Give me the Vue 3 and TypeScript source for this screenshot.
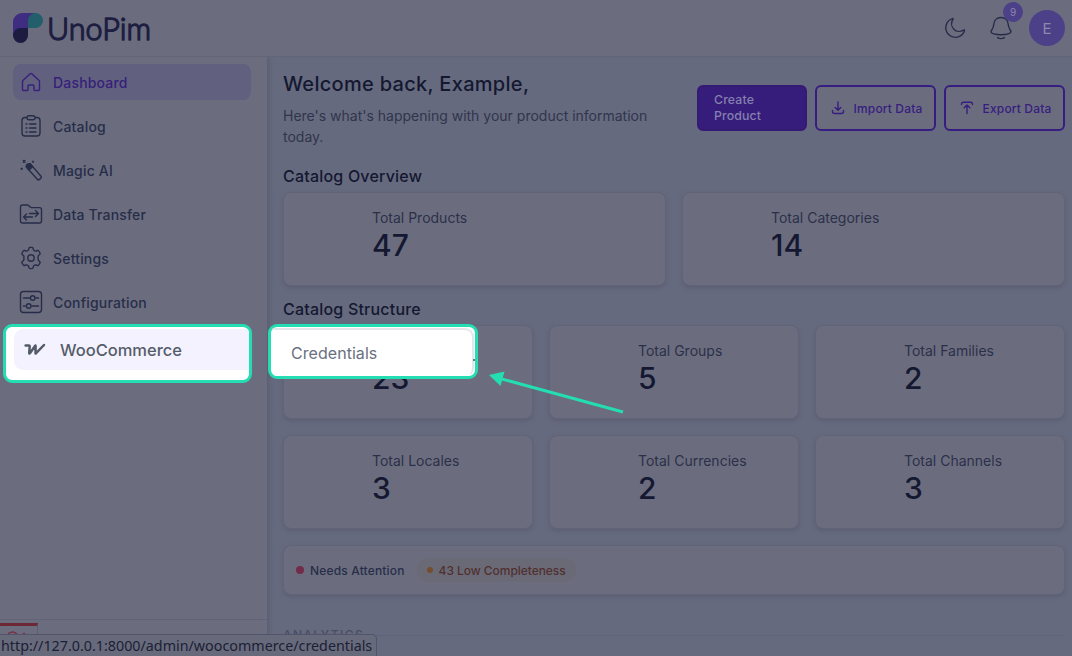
<script setup lang="ts">
interface NavItem { label: string; icon: string }
interface Stat { label: string; value: string }

const nav: NavItem[] = [
  { label: 'Dashboard', icon: 'home' },
  { label: 'Catalog', icon: 'catalog' },
  { label: 'Magic AI', icon: 'magic' },
  { label: 'Data Transfer', icon: 'transfer' },
  { label: 'Settings', icon: 'settings' },
  { label: 'Configuration', icon: 'config' },
]
const overview: Stat[] = [
  { label: 'Total Products', value: '47' },
  { label: 'Total Categories', value: '14' },
]
const structure: Stat[] = [
  { label: 'Total Attributes', value: '23' },
  { label: 'Total Groups', value: '5' },
  { label: 'Total Families', value: '2' },
  { label: 'Total Locales', value: '3' },
  { label: 'Total Currencies', value: '2' },
  { label: 'Total Channels', value: '3' },
]
</script>

<template>
  <div class="app">
    <header class="header">
      <svg class="logo" width="144" height="40" viewBox="0 0 144 40">
        <path d="M9 5H23V20H15V28H0V14A9 9 0 0 1 9 5Z" fill="#3e2d80" />
        <path d="M22.500 5a7.500 7.500 0 0 1 0 15H15v-7.500A7.500 7.500 0 0 1 22.500 5Z" fill="#235f6b" />
        <path d="M7.500 20H15V27.500A7.500 7.500 0 1 1 7.500 20Z" fill="#1b1c3f" />
        <text class="wordmark" x="34" y="32" textLength="104" lengthAdjust="spacingAndGlyphs">UnoPim</text>
      </svg>
      <div class="tools">
        <svg class="moon" width="24" height="24" viewBox="0 0 24 24"><path d="M9.400 2.600A9.600 9.600 0 1 0 21.500 14.800c.2-.9-.4-1.100-1-.6A7.700 7.700 0 0 1 9.900 3.500c.4-.6.200-1.100-.5-.9Z" /></svg>
        <div class="bell-wrap">
          <svg width="24" height="26" viewBox="0 0 24 26"><path d="M12 2.500c-4.400 0-7 3-7.200 6.700C4.600 13 2.600 14.600 2.100 16.300c-.6 2.300 4.300 3.400 9.900 3.400s10.500-1.100 9.900-3.400c-.5-1.700-2.500-3.300-2.700-7.100C19 5.500 16.400 2.500 12 2.500ZM8.600 22.600c1.800 1.300 5 1.300 6.800 0" /></svg>
          <span class="count">9</span>
        </div>
        <span class="avatar">E</span>
      </div>
    </header>

    <div class="body">
      <aside class="sidebar">
        <nav class="nav">
          <div v-for="(n, i) in nav" :key="n.label" class="nav-item" :class="{ active: i === 0 }">
            <svg width="24" height="24" viewBox="0 0 24 24">
              <path v-if="n.icon === 'home'" d="M3.500 11.500q0-.8.600-1.300L11.200 3.800q.8-.7 1.600 0L19.900 10.200q.6.500.6 1.300V19.500q0 1-1 1H16q-1 0-1-1V16q0-1-1-1h-4q-1 0-1 1v3.500q0 1-1 1H4.500q-1 0-1-1Z" />
              <g v-else-if="n.icon === 'catalog'">
                <path d="M8 3.500H6a3 3 0 0 0-3 3V19a3 3 0 0 0 3 3h12a3 3 0 0 0 3-3V6.500a3 3 0 0 0-3-3h-2M10 1.800h4q2 0 2 2t-2 2h-4q-2 0-2-2t2-2Z" />
                <path d="M10.500 10h6.500M10.500 14h6.500M10.500 18h6.500M7 10h1M7 14h1M7 18h1" />
              </g>
              <g v-else-if="n.icon === 'magic'">
                <path d="m7.300 9 3.800-3.400 10.900 12.600q.9 1.100-.3 2.200l-1.200 1q-1.200 1-2.200-.2L7.300 9Z" />
                <path class="solid" d="M7.300 8.600Q7 5.600 10.900 5.600L13.700 8.800 10 12Z" />
                <path d="m4.300 2.600 1.600 1.600M5.900 2.600 4.300 4.200M2.700 10.200l.01 1.200M2.100 10.800h1.200M14 3.300v1M13.500 3.800h1" />
              </g>
              <g v-else-if="n.icon === 'transfer'">
                <path d="M3.500 3H8.500q.6 0 1 .4l1.700 1.700q.5.500 1.200.500H20.500q2 0 2 2V19q0 2-2 2h-17q-2 0-2-2V5q0-2 2-2Z" />
                <path d="M10.500 11.500H19.500m-3-3 3 3-3 3M13.500 15H4.500m3-3-3 3 3 3" />
              </g>
              <g v-else-if="n.icon === 'settings'">
                <path d="M9.900 2.300q.2-.9 1.100-.9h2q.9 0 1.100.9l.3 1.300q.2.700.9 1l.5.300q.7.300 1.300.1l1.300-.5q.9-.3 1.400.5l1.100 1.900q.5.800-.2 1.500l-1 .9q-.6.500-.6 1.200v3q0 .7.600 1.200l1 .9q.7.700.2 1.500l-1.100 1.900q-.5.800-1.400.5l-1.300-.5q-.6-.2-1.300.1l-.5.300q-.7.300-.9 1l-.3 1.300q-.2.900-1.100.9h-2q-.9 0-1.100-.9l-.3-1.300q-.2-.7-.9-1l-.5-.3q-.7-.3-1.300-.1l-1.300.5q-.9.300-1.400-.5l-1.100-1.900q-.5-.8.200-1.500l1-.9q.6-.5.600-1.200v-3q0-.7-.6-1.200l-1-.9q-.7-.7-.2-1.500l1.100-1.900q.5-.8 1.400-.5l1.300.5q.6.200 1.300-.1l.5-.3q.7-.3.900-1Z" />
                <circle cx="12" cy="12" r="3.200" />
              </g>
              <g v-else>
                <rect x="1.500" y="1.500" width="21" height="21" rx="3" />
                <path d="M4.500 8h6m6.500 0h2.500M4.500 16h1.500m7 0h6.500" />
                <circle cx="13.700" cy="8" r="2.300" /><circle cx="9.700" cy="16" r="2.300" />
              </g>
            </svg>
            <span>{{ n.label }}</span>
          </div>
        </nav>
        <div class="collapse"></div>
      </aside>

      <main class="main">
        <section class="intro">
          <div class="intro-text">
            <h1>Welcome back, Example,</h1>
            <p>Here's what's happening with your product information today.</p>
          </div>
          <div class="actions">
            <button class="btn primary">Create Product</button>
            <button class="btn">
              <svg width="16" height="16" viewBox="0 0 16 16"><path d="M8 2v8M5.200 7.500 8 10.300l2.800-2.800M2.500 10.500v1q0 2 2 2h7q2 0 2-2v-1" /></svg>
              Import Data
            </button>
            <button class="btn">
              <svg width="16" height="16" viewBox="0 0 16 16"><path d="M8 13.500V5M5.200 7.700 8 4.900l2.800 2.800M2.500 4.500v-.3q0-2 2-2h7q2 0 2 2v.3" /></svg>
              Export Data
            </button>
          </div>
        </section>
        <h2>Catalog Overview</h2>
        <div class="grid two">
          <div v-for="s in overview" :key="s.label" class="card">
            <span class="label">{{ s.label }}</span><strong>{{ s.value }}</strong>
          </div>
        </div>
        <h2 class="second">Catalog Structure</h2>
        <div class="grid three">
          <div v-for="s in structure" :key="s.label" class="card">
            <span class="label">{{ s.label }}</span><strong>{{ s.value }}</strong>
          </div>
        </div>
        <div class="attention">
          <i class="dot"></i><span class="needs">Needs Attention</span>
          <span class="pill"><i></i>43 Low Completeness</span>
        </div>
        <div class="analytics"><span>ANALYTICS</span><i></i></div>
      </main>
    </div>

    <div class="debug"><svg width="30" height="12" viewBox="0 0 30 12"><path d="m7.500 9 2-2.200 3-1 3 1 2 2.200M22.500 8.500l2-1" /></svg></div>
    <div class="status">http://127.0.0.1:8000/admin/woocommerce/credentials</div>

    <div class="spot woo">
      <div class="woo-item">
        <svg width="24" height="16" viewBox="0 0 24 16"><path d="M2.600 3.500H6q.8 0 .7.900L6.200 11q0 1 .7.200L12 4q.7-1 .6.200L12.500 11q0 1 .6.200L21 3" /></svg>
        <span>WooCommerce</span>
      </div>
    </div>
    <div class="spot cred"><div class="cred-item">Credentials</div><i class="speck"></i></div>
    <svg class="arrow" width="140" height="46" viewBox="0 0 140 46">
      <path d="M138 42 15 8.500" /><path class="head" d="M4 5 19.500 1.500 15.500 16Z" />
    </svg>
  </div>
</template>

<style>
body { margin: 0; overflow: hidden; }
</style>

<style scoped>
* { box-sizing: border-box; }
.app { position: relative; width: 1072px; height: 656px; overflow: hidden; background: #666a7e; font-family: Inter, "Liberation Sans", sans-serif; color: #272d49; }
svg { fill: none; stroke: currentColor; stroke-width: 1.4; stroke-linecap: round; stroke-linejoin: round; flex: none; display: block; }
.header { height: 57px; background: #6b6d7e; border-bottom: 1px solid #626477; display: flex; justify-content: space-between; align-items: center; padding: 0 7px 0 13px; }
.logo { stroke: none; overflow: visible; }
.wordmark { font: 300 32px Lato, sans-serif; fill: #1d1e41; stroke: #1d1e41; stroke-width: 1.5; }
.tools { display: flex; align-items: center; }
.moon { margin-right: 22px; }
.bell-wrap { position: relative; margin-right: 16px; }
.count { position: absolute; left: 14px; top: -13px; width: 20px; height: 20px; border-radius: 50%; background: #4c4088; color: #8c88ae; font-size: 10px; line-height: 20px; text-align: center; }
.avatar { width: 36px; height: 36px; border-radius: 50%; background: #4c4088; color: #8c88ae; font-size: 15px; font-weight: 400; line-height: 37px; text-align: center; }
.body { display: flex; height: 599px; }
.sidebar { width: 267px; background: #6b6d7e; box-shadow: 1px 0 5px #56596e; clip-path: inset(0 -10px 0 0); display: flex; flex-direction: column; flex: none; }
.nav { padding: 7px 16px 0 13px; display: flex; flex-direction: column; gap: 8px; flex: 1; }
.nav-item { height: 36px; border-radius: 8px; padding: 0 6px; display: flex; align-items: center; gap: 10px; font-size: 14px; font-weight: 500; letter-spacing: .18px; }
.active { background: #62607f; color: #36207a; }
.solid { fill: currentColor; }
.collapse { height: 37px; border-top: 1px solid #616477; }
.main { flex: 1; padding: 13px 7px 0 16px; min-width: 0; }
.intro { display: flex; justify-content: space-between; height: 94px; }
.intro-text { width: 400px; }
h1 { margin: 0; font-size: 20px; line-height: 28px; font-weight: 500; color: #141831; letter-spacing: .3px; }
p { margin: 7px 0 0; font-size: 14px; line-height: 21px; color: #30354d; letter-spacing: 0; }
.actions { display: flex; gap: 8px; padding-top: 15px; }
.btn { height: 46px; width: 121px; border: 2px solid #371d80; border-radius: 6px; background: #6b6d7e; color: #371d80; font: 500 12px Inter, sans-serif; letter-spacing: .15px; padding: 0 0 0 1px; display: flex; align-items: center; justify-content: center; gap: 8px; white-space: nowrap; }
.primary { width: 110px; background: #361c7b; color: #8580ae; border-color: #331a75; font-size: 12.300px; line-height: 16px; white-space: normal; text-align: left; padding: 0 36px 0 15px; }
h2 { margin: 0; font-size: 16px; line-height: 24px; font-weight: 500; color: #141831; letter-spacing: .2px; }
.second { margin-top: 11px; }
.grid { display: grid; gap: 16px; margin-top: 4px; }
.two { grid-template-columns: 1fr 1fr; }
.three { grid-template-columns: 1fr 1fr 1fr; }
.card { height: 94px; border: 1px solid #616478; border-radius: 8px; background: #6b6d7e; box-shadow: 0 2px 4px #5c5f73; padding: 15px 0 0 88px; display: flex; flex-direction: column; }
.label { font-size: 14px; line-height: 20px; color: #2b304a; }
strong { font-size: 30px; line-height: 34px; font-weight: 500; color: #141831; }
.attention { height: 50px; margin-top: 16px; border: 1px solid #616478; border-radius: 8px; background: #6b6d7e; box-shadow: 0 2px 4px #5c5f73; display: flex; align-items: center; padding-left: 12px; font-size: 12px; font-weight: 500; }
.needs { letter-spacing: .17px; }
.dot { width: 8px; height: 8px; border-radius: 50%; background: #722b48; margin-right: 6px; }
.pill { margin-left: 12px; height: 24px; border-radius: 12px; background: #6a6a77; color: #50302f; display: flex; align-items: center; padding: 0 10px; letter-spacing: -.05px; }
.pill i { width: 6px; height: 6px; border-radius: 50%; background: #764d2c; margin-right: 6px; }
.analytics { margin-top: 32px; display: flex; align-items: center; gap: 12px; font-size: 12px; line-height: 16px; font-weight: 500; letter-spacing: 1.4px; color: #494d66; }
.analytics i { flex: 1; height: 1px; background: #606377; }
.debug { position: absolute; left: 0; top: 623px; width: 38px; height: 33px; border-top: 3px solid #6d2735; border-right: 1px solid #5c5f72; color: #7c2d42; background: #6b6d7e; }
.status { position: absolute; left: 0; top: 634px; width: 377px; height: 23px; padding-left: 1px; border: 1px solid #525569; border-left: 0; border-radius: 0 5px 0 0; background: #676a7b; color: #1c2036; font: 14.300px/21px "Noto Sans", sans-serif; white-space: nowrap; }
.spot { position: absolute; background: #fff; border: 3px solid #24ddb2; border-radius: 9px; overflow: hidden; }
.woo { left: 3px; top: 324px; width: 249px; height: 59px; padding: 2px 0 0 8px; }
.woo-item { height: 41px; background: #f4f2fe; border-radius: 9px 0 0 9px; display: flex; align-items: center; padding-left: 9px; gap: 13px; color: #555c69; font-size: 16.500px; font-weight: 500; }
.woo-item svg { stroke-width: 2.500; }
.cred { left: 268px; top: 324px; width: 210px; height: 55px; background: #fff; }
.cred-item { height: 49px; width: 203px; margin-top: 1px; border: 2px solid #e4e6e9; border-left: 0; border-bottom-color: #fff; border-radius: 0 9px 9px 0; padding: 3px 0 0 20px; color: #697080; font-size: 16px; line-height: 41px; letter-spacing: .05px; }
.speck { position: absolute; right: 0; top: 32px; width: 2px; height: 2px; background: #6d7684; }
.arrow { position: absolute; left: 485px; top: 370px; color: #24ddb2; stroke-width: 3; stroke-linecap: butt; }
.head { fill: currentColor; stroke: none; }
</style>
